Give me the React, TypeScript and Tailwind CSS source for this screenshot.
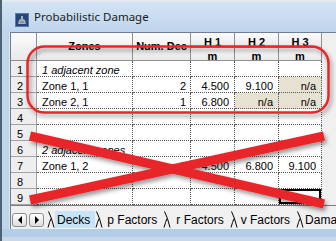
import React from 'react'

type Row = {
  zone?: string
  italic?: boolean
  num?: string
  h?: [string, string, string]
  na?: [boolean, boolean, boolean]
}

const rows: Row[] = [
  { zone: '1 adjacent zone', italic: true },
  { zone: 'Zone 1, 1', num: '2', h: ['4.500', '9.100', 'n/a'], na: [false, false, true] },
  { zone: 'Zone 2, 1', num: '1', h: ['6.800', 'n/a', 'n/a'], na: [false, true, true] },
  {},
  {},
  { zone: '2 adjacent zones', italic: true },
  { zone: 'Zone 1, 2', num: '3', h: ['4.500', '6.800', '9.100'] },
  {},
  {}
]

const tabs = ['Decks', 'p Factors', 'r Factors', 'v Factors', 'Damage']
const tabPad = ['pl-[2px] pr-[5px]', 'pl-[4px] pr-[6px]', 'pl-[5px] pr-[6px]', 'pl-[3px] pr-[6px]', 'pl-[1px] pr-[4px]']

const hdr = 'bg-gradient-to-b from-[#fbfbfb] to-[#e9e9e9] border-r border-b border-[#8f8f8f] font-bold text-center'
const cell = 'h-4 border-r border-b border-dotted border-[#5a5a5a] text-[11px] leading-[18px] overflow-hidden whitespace-nowrap'

function TitleIcon(): React.ReactElement {
  return (
    <svg width="14" height="14" viewBox="0 0 14 14" className="mt-[11px] ml-[13px] shrink-0">
      <rect x="0" y="0" width="14" height="14" fill="#27467a" />
      <rect x="0.5" y="0.5" width="13" height="13" fill="none" stroke="#5b78a6" />
      <path d="M3 11 L4 7 L6 6 L6 3 L8 3 L8 6 L10 7 L11 11 Z" fill="#a9b1bb" />
      <path d="M5 9 L9 9" stroke="#6f7780" />
    </svg>
  )
}

function TabSep(): React.ReactElement {
  return (
    <svg width="8" height="17" viewBox="0 0 8 17" className="shrink-0">
      <path d="M1.5 0.5 Q4.5 6 7 16.5" fill="none" stroke="#000" strokeWidth="1" />
      <path d="M4 7.5 Q2.5 11 1 16.5" fill="none" stroke="#000" strokeWidth="1" />
    </svg>
  )
}

function ScrollBtn({ dir }: { dir: 'l' | 'r' }): React.ReactElement {
  return (
    <div className="flex h-[14px] w-[15px] items-center justify-center rounded-[3px] border border-[#8c8c8c] bg-gradient-to-b from-white to-[#dedede]">
      <svg width="6" height="8" viewBox="0 0 6 8">
        {dir === 'l' ? <path d="M5 0 L1 4 L5 8 Z" fill="#000" /> : <path d="M1 0 L5 4 L1 8 Z" fill="#000" />}
      </svg>
    </div>
  )
}

function Annotations(): React.ReactElement {
  return (
    <svg width="336" height="241" viewBox="0 0 336 241" className="pointer-events-none absolute left-0 top-0">
      <defs>
        <filter id="sh" x="-10%" y="-10%" width="120%" height="130%">
          <feDropShadow dx="2" dy="3" stdDeviation="2" floodColor="#000" floodOpacity="0.4" />
        </filter>
      </defs>
      <g filter="url(#sh)">
        <rect x="27.5" y="46.5" width="301" height="66" rx="17" fill="none" stroke="#e8262c" strokeWidth="2.5" />
        <line x1="30" y1="136" x2="324" y2="204" stroke="#e8262c" strokeWidth="9" />
        <line x1="30" y1="200" x2="324" y2="136" stroke="#e8262c" strokeWidth="9" />
      </g>
    </svg>
  )
}

export default function App(): React.ReactElement {
  return (
    <div className="relative h-[241px] w-[336px] overflow-hidden bg-[#c3d7ec] font-['Liberation_Sans',Arial,sans-serif] text-black">
      <div className="flex h-full flex-col border-l-2 border-[#4b6275]">
        {/* title bar */}
        <div className="flex h-[32px] shrink-0 items-start border-t-2 border-[#e3e9ef] bg-gradient-to-b from-[#d3e3f4] to-[#bfd5ec]">
          <TitleIcon />
          <span className="ml-[5px] mt-[7px] font-['Noto_Sans',sans-serif] text-[11.5px] leading-[16px] text-[#1b1b1b]">
            Probabilistic Damage
          </span>
        </div>

        <div className="flex min-h-0 flex-1">
          {/* left frame */}
          <div className="w-[8px] shrink-0 border-r border-[#dbe6f2] bg-[#c1d5ea]" />

          {/* client */}
          <div className="flex flex-1 flex-col border-l border-[#6e7f92] bg-[#f0f0f0]">
            <div className="grid grid-cols-[26px_96px_58px_44px_44px_43px] grid-rows-[15px_13px_repeat(9,16px)] border-t border-[#6e7f92] text-[11px]">
              <div className={`${hdr} row-span-2`} />
              <div className={`${hdr} row-span-2 leading-[26px]`}>Zones</div>
              <div className={`${hdr} row-span-2 leading-[26px]`}>Num. Dec</div>
              <div className={`${hdr} leading-[19px]`}>H 1</div>
              <div className={`${hdr} leading-[19px]`}>H 2</div>
              <div className={`${hdr} leading-[19px]`}>H 3</div>
              <div className={`${hdr} leading-[16px]`}>m</div>
              <div className={`${hdr} leading-[16px]`}>m</div>
              <div className={`${hdr} leading-[16px]`}>m</div>

              {rows.map((r, i) => (
                <React.Fragment key={i}>
                  <div className="h-4 border-r border-b border-[#a3a3a3] bg-[#eeeeee] pl-[6px] text-[11px] leading-[18px]">
                    {i + 1}
                  </div>
                  <div className={`${cell} bg-white pl-[5px] ${r.italic ? 'italic' : ''}`}>{r.zone}</div>
                  <div className={`${cell} bg-white pr-[4px] text-right`}>{r.num}</div>
                  {[0, 1, 2].map((k) => (
                    <div
                      key={k}
                      className={`${cell} pr-[5px] text-right ${r.na && r.na[k] ? 'bg-[#e6e2d2]' : 'bg-white'} ${
                        i === 8 && k === 2 ? 'shadow-[inset_0_0_0_2px_#000]' : ''
                      }`}>
                      {r.h ? r.h[k] : ''}
                    </div>
                  ))}
                </React.Fragment>
              ))}
            </div>

            {/* sheet tabs */}
            <div className="flex h-[24px] items-end gap-[2px] border-t border-[#7d7d7d] pb-[1px] pl-[1px] text-[12px]">
              <div className="mb-[1px]">
                <ScrollBtn dir="l" />
              </div>
              <div className="mb-[1px]">
                <ScrollBtn dir="r" />
              </div>
              <div className="ml-[1px] flex items-end">
                {tabs.map((t, i) => (
                  <React.Fragment key={t}>
                    <TabSep />
                    <span
                      className={`h-[17px] whitespace-nowrap leading-[18px] ${tabPad[i]} ${
                        i === 0 ? 'bg-[#c6e4f6]' : ''
                      }`}>
                      {t}
                    </span>
                  </React.Fragment>
                ))}
              </div>
            </div>
          </div>
        </div>

        {/* bottom frame */}
        <div className="h-[12px] shrink-0 border-b-[4px] border-[#c8d8e8] bg-[#b4cde7]" />
      </div>
      <Annotations />
    </div>
  )
}
